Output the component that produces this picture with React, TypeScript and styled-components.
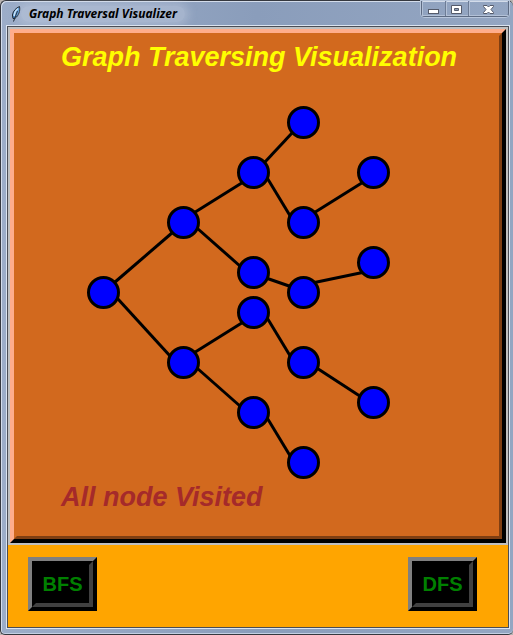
import React from "react";
import styled, { createGlobalStyle } from "styled-components";

const GlobalStyle = createGlobalStyle`
  *, *::before, *::after { box-sizing: border-box; }
  body { margin: 0; background: #b9b4b2; }
`;

const Window = styled.main`
  display: flex;
  flex-direction: column;
  min-height: 100vh;
  padding: 0 4px 6px 6px;
  border: 1px solid #35383f;
  border-right-width: 0;
  border-radius: 6px 6px 5px 5px;
  background: linear-gradient(90deg, #9cadc8 0, #8a9dbb 50%, #94a6c2 100%);
  box-shadow: inset 1px 1px 0 #d3dcea, inset 0 -1px 0 #c3d0e3;
  font-family: "Liberation Sans", Arial, sans-serif;
`;

const TitleBar = styled.header`
  display: flex;
  align-items: flex-start;
  height: 25px;
  padding-left: 3px;
`;

const TitleLabel = styled.div`
  display: flex;
  align-items: center;
  gap: 7px;
  flex: 1;
  height: 25px;
`;

const TitleText = styled.span`
  padding: 0 8px;
  margin-left: -8px;
  border-radius: 10px;
  background: rgba(205, 216, 232, 0.35);
  box-shadow: 0 0 8px 4px rgba(205, 216, 232, 0.35);
  color: #000;
  font: italic 700 12px/16px "Noto Sans", "Segoe UI", sans-serif;
  white-space: nowrap;
`;

const Controls = styled.div`
  display: flex;
  height: 16px;
  border: 1px solid #5d6b83;
  border-top: 0;
  border-radius: 0 0 4px 4px;
  box-shadow: 0 0 0 1px #b8c6db;
`;

const Control = styled.button<{ $wide?: boolean }>`
  display: grid;
  place-items: center;
  width: ${(p) => (p.$wide ? 40 : 23)}px;
  height: 15px;
  padding: 0;
  border: 0;
  border-left: 1px solid #6d7c95;
  background: transparent;
  box-shadow: inset 1px 0 0 #b3c1d7, inset 0 -1px 0 #b3c1d7;
  &:first-child { border-left: 0; }
`;

const Client = styled.div`
  display: flex;
  flex-direction: column;
  flex: 1;
  border: 1px solid #4a4d55;
  background: #ffa500;
  box-shadow: 0 0 0 1px #dbe4f0;
`;

const CanvasFrame = styled.section`
  border: 2px solid #c0c0c0;
`;

const OuterBevel = styled.div`
  border: 4px solid;
  border-color: #ffad8c #000 #000 #ffad8c;
`;

const InnerBevel = styled.div`
  border: 3px solid;
  border-color: #d2691e #7e3e12 #7e3e12 #d2691e;
  padding: 6px 0 24px;
  background: #d2691e;
`;

const Caption = styled.p<{ $color: string }>`
  margin: 0;
  padding-left: 44px;
  color: ${(p) => p.$color};
  font-size: 27px;
  font-style: italic;
  font-weight: 700;
  line-height: 30px;
  white-space: nowrap;
`;

const Graph = styled.svg`
  display: block;
`;

const Actions = styled.footer`
  display: flex;
  justify-content: space-between;
  align-items: flex-start;
  flex: 1;
  padding: 12px 31px 16px 20px;
`;

const ButtonFace = styled.span`
  display: block;
  padding: 8px 0;
  border: 4px solid;
  border-color: #000 #404040 #404040 #000;
`;

const ActionButton = styled.button`
  width: 69px;
  padding: 0;
  border: 4px solid;
  border-color: #808080 #000 #000 #808080;
  background: #000;
  color: #008000;
  font: 700 20px/22px "Liberation Sans", Arial, sans-serif;
`;

type Point = [number, number];

const nodes: Record<string, Point> = {
  a: [86, 220],
  b: [166, 150],
  c: [236, 100],
  d: [286, 50],
  e: [286, 150],
  f: [356, 100],
  g: [236, 200],
  h: [286, 220],
  i: [356, 190],
  j: [166, 290],
  k: [236, 240],
  l: [286, 290],
  m: [356, 330],
  n: [236, 340],
  o: [286, 390],
};

const edges = ["ab", "aj", "bc", "bg", "cd", "ce", "ef", "gh", "hi", "jk", "jn", "kl", "lm", "no"];

function Edge({ from, to }: { from: Point; to: Point }) {
  const rising = to[1] < from[1];
  return (
    <line
      x1={from[0] + (rising ? 11 : 14)}
      y1={from[1] + (rising ? -10 : 6)}
      x2={to[0] - (rising ? 11 : 13)}
      y2={to[1] + (rising ? 10 : -6)}
    />
  );
}

function FeatherIcon() {
  return (
    <svg width="12" height="18" viewBox="0 0 12 18" aria-hidden="true">
      <path d="M9.5 1.5 C6 3 3 6 2.5 10 L3 13.5 L5.5 13 C8.5 10.5 10.5 6 9.5 1.5Z" fill="#4a93d8" stroke="#101820" strokeWidth="1" />
      <path d="M8 3.5 C5.5 5.5 4.3 8 4.2 11" stroke="#c9e5fa" strokeWidth="1.6" fill="none" />
      <path d="M7.5 6 L3.5 16.5" stroke="#16202c" strokeWidth="1" fill="none" />
    </svg>
  );
}

export default function App() {
  return (
    <>
      <GlobalStyle />
      <Window>
        <TitleBar>
          <TitleLabel>
            <FeatherIcon />
            <TitleText>Graph Traversal Visualizer</TitleText>
          </TitleLabel>
          <Controls>
            <Control aria-label="Minimize">
              <svg width="12" height="12" viewBox="0 0 12 12">
                <rect x="0.5" y="6.5" width="10" height="4" fill="#fff" stroke="#555b6b" />
              </svg>
            </Control>
            <Control aria-label="Maximize">
              <svg width="12" height="12" viewBox="0 0 12 12">
                <path d="M0.5 2.5h10v8h-10z" fill="#fff" stroke="#555b6b" />
                <path d="M3.5 5.5h4v2h-4z" fill="#8f9fb8" stroke="#555b6b" />
              </svg>
            </Control>
            <Control aria-label="Close" $wide>
              <svg width="12" height="12" viewBox="0 0 12 12">
                <path d="M0.5 2.5h3.5l1.5 1.5 1.5-1.5h3.5v1L8 6.5l2.5 3v1H7L5.5 9 4 10.5H0.5v-1L3 6.5 0.5 3.5z" fill="#fff" stroke="#555b6b" />
              </svg>
            </Control>
          </Controls>
        </TitleBar>
        <Client>
          <CanvasFrame>
            <OuterBevel>
              <InnerBevel>
                <Caption as="h1" $color="#ffff00">Graph Traversing Visualization</Caption>
                <Graph width="482" height="410" viewBox="0 0 482 410" role="img" aria-label="Graph">
                  <g transform="translate(0.5 0.5)" stroke="#000" strokeWidth="3">
                    {edges.map((id) => (
                      <Edge key={id} from={nodes[id[0]]} to={nodes[id[1]]} />
                    ))}
                    {Object.entries(nodes).map(([id, [x, y]]) => (
                      <circle key={id} cx={x} cy={y} r="15" fill="#0000ff" />
                    ))}
                  </g>
                </Graph>
                <Caption $color="#a52a2a">All node Visited</Caption>
              </InnerBevel>
            </OuterBevel>
          </CanvasFrame>
          <Actions>
            <ActionButton><ButtonFace>BFS</ButtonFace></ActionButton>
            <ActionButton><ButtonFace>DFS</ButtonFace></ActionButton>
          </Actions>
        </Client>
      </Window>
    </>
  );
}
